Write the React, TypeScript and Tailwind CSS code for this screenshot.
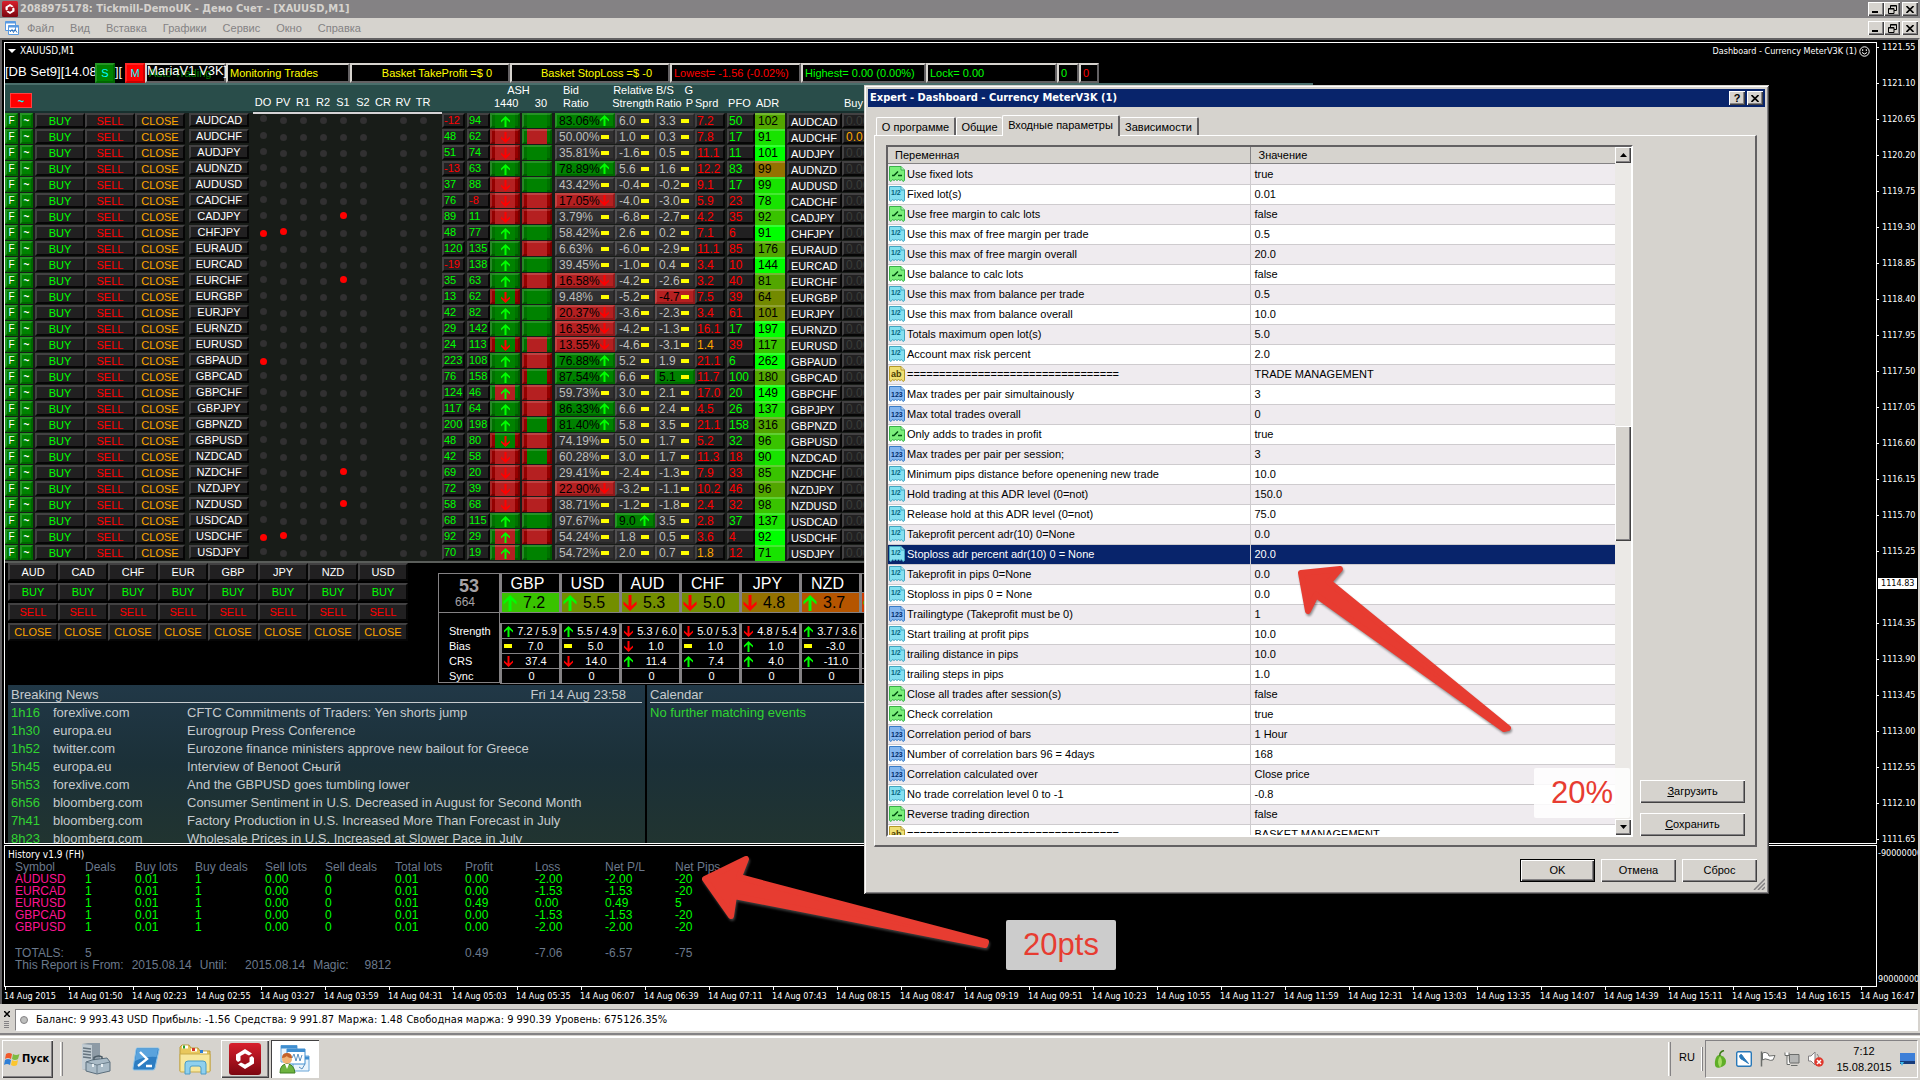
import React from "react";

type Tone = "g" | "r" | "n";

const BEVEL = "border-t-2 border-l-2 border-r-2 border-b-2 border-t-white/15 border-l-white/15 border-r-black/80 border-b-black/80";
const LIT = "border-t-2 border-l-2 border-r-2 border-b-2 border-t-white/15 border-l-white/15 border-r-black/20 border-b-black/20";
const RAISED =
  "bg-[#d6d3ce] shadow-[inset_1px_1px_#fff,inset_-1px_-1px_#424142,inset_-2px_-2px_#848284]";
const TAHOMA = "font-['DejaVu_Sans_Condensed','DejaVu_Sans',sans-serif]";

// pair | n1 | n2 | ash 1440 outer+inner+arrow | ash 30 outer+inner | bid+tone | strength+tone | b/s+tone | spread | pfo+tone | adr+level | red dots
const PAIRS = [
  "AUDCAD|-12|94|ggu|gg|83.06%g|6.0n|3.3n|7.2|50g|102d|",
  "AUDCHF|48|62|rrd|gr|50.00%n|1.0n|0.3n|7.8|17g|91b|",
  "AUDJPY|51|74|rrd|gg|35.81%n|-1.6n|0.5n|11.1|11g|101a|",
  "AUDNZD|-13|63|ggu|gg|78.89%g|5.6n|1.6n|12.2|83g|99f|",
  "AUDUSD|37|88|rrd|gg|43.42%n|-0.4n|-0.2n|9.1|17g|99b|",
  "CADCHF|76|-8|rrd|rr|17.05%r|-4.0n|-3.0n|5.9|23r|78b|",
  "CADJPY|89|11|rrd|rr|3.79%n|-6.8n|-2.7n|4.2|35r|92c|S1",
  "CHFJPY|48|77|ggu|gg|58.42%n|2.6n|0.2n|7.1|6r|91a|DO,PV",
  "EURAUD|120|135|ggu|rr|6.63%n|-6.0n|-2.9n|11.1|85r|176d|",
  "EURCAD|-19|138|ggu|gg|39.45%n|-1.0n|0.4n|3.4|10r|144a|",
  "EURCHF|35|63|ggu|rr|16.58%r|-4.2n|-2.6n|3.2|40r|81d|S1",
  "EURGBP|13|62|rgd|gg|9.48%n|-5.2n|-4.7r|7.5|39r|64e|",
  "EURJPY|42|82|ggu|gg|20.37%r|-3.6n|-2.3n|3.4|61r|101e|",
  "EURNZD|29|142|ggu|gg|16.35%r|-4.2n|-1.3n|16.1|17g|197a|",
  "EURUSD|24|113|rgd|gr|13.55%r|-4.6n|-3.1n|1.4|39r|117c|",
  "GBPAUD|223|108|ggu|rr|76.88%g|5.2n|1.9n|21.1|6g|262a|DO",
  "GBPCAD|76|158|ggu|rg|87.54%g|6.6n|5.1g|11.7|100g|180d|",
  "GBPCHF|124|46|gru|rr|59.73%n|3.0n|2.1n|17.0|20g|149a|",
  "GBPJPY|117|64|ggu|rr|86.33%g|6.6n|2.4n|4.5|26g|137b|",
  "GBPNZD|200|198|ggu|rg|81.40%g|5.8n|3.5n|21.1|158g|316d|",
  "GBPUSD|48|80|rgd|rr|74.19%n|5.0n|1.7n|5.2|32g|96c|",
  "NZDCAD|42|58|rrd|rg|60.28%n|3.0n|1.7n|11.3|18r|90b|",
  "NZDCHF|69|20|rrd|rr|29.41%n|-2.4n|-1.3n|7.9|33r|85c|S1",
  "NZDJPY|72|39|rrd|rr|22.90%r|-3.2n|-1.1n|10.2|46r|96d|",
  "NZDUSD|58|68|rrd|rr|38.71%n|-1.2n|-1.8n|2.4|32r|98c|S1",
  "USDCAD|68|115|ggu|gg|97.67%n|9.0g|3.5n|2.8|37g|137b|",
  "USDCHF|92|29|gru|rr|54.24%n|1.8n|0.5n|3.6|4r|92a|DO,PV",
  "USDJPY|70|19|gru|gg|54.72%n|2.0n|0.7n|1.8|12r|71b|",
].map((line) => line.split("|"));

const DOTS = ["DO", "PV", "R1", "R2", "S1", "S2", "CR", "RV", "TR"];

const LEVEL: Record<string, string> = {
  a: "bg-[#00ff00]",
  b: "bg-[#18e300]",
  c: "bg-[#39c300]",
  d: "bg-[#52a600]",
  e: "bg-[#738a00]",
  f: "bg-[#947100]",
};

const TONE: Record<Tone, string> = {
  g: "bg-[#008200] text-black",
  r: "bg-[#b52021] text-black",
  n: "bg-[#313031] text-[#bdbebd]",
};

const COLS = [15, 15, 50, 50, 50, 68, 20, 20, 20, 20, 20, 20, 20, 20, 20, 9, 25, 23, 32, 33, 60, 40, 40, 30, 30, 32, 55, 28];

const METER = [
  { name: "GBP", value: "7.2", dir: "u", bg: "bg-[#39c300]", rows: ["u7.2 / 5.9", "n7.0", "d37.4", "0"] },
  { name: "USD", value: "5.5", dir: "u", bg: "bg-[#738e00]", rows: ["u5.5 / 4.9", "n5.0", "d14.0", "0"] },
  { name: "AUD", value: "5.3", dir: "d", bg: "bg-[#738e00]", rows: ["d5.3 / 6.0", "d1.0", "u11.4", "0"] },
  { name: "CHF", value: "5.0", dir: "d", bg: "bg-[#738e00]", rows: ["d5.0 / 5.3", "n1.0", "u7.4", "0"] },
  { name: "JPY", value: "4.8", dir: "d", bg: "bg-[#947100]", rows: ["d4.8 / 5.4", "u1.0", "u4.0", "0"] },
  { name: "NZD", value: "3.7", dir: "u", bg: "bg-[#b55500]", rows: ["u3.7 / 3.6", "n-3.0", "u-11.0", "0"] },
  { name: "", value: "", dir: "u", bg: "bg-[#ce3c00]", rows: ["u", "n", "u", ""] },
];

const NEWS = [
  ["1h16", "forexlive.com", "CFTC Commitments of Traders: Yen shorts jump"],
  ["1h30", "europa.eu", "Eurogroup Press Conference"],
  ["1h52", "twitter.com", "Eurozone finance ministers approve new bailout for Greece"],
  ["5h45", "europa.eu", "Interview of Benoot Сњurй"],
  ["5h53", "forexlive.com", "And the GBPUSD goes tumbling lower"],
  ["6h56", "bloomberg.com", "Consumer Sentiment in U.S. Decreased in August for Second Month"],
  ["7h41", "bloomberg.com", "Factory Production in U.S. Increased More Than Forecast in July"],
  ["8h23", "bloomberg.com", "Wholesale Prices in U.S. Increased at Slower Pace in July"],
];

const HISTORY_HEAD = ["Symbol", "Deals", "Buy lots", "Buy deals", "Sell lots", "Sell deals", "Total lots", "Profit", "Loss", "Net P/L", "Net Pips"];
const HISTORY_COLS = [70, 50, 60, 70, 60, 70, 70, 70, 70, 70, 70];
const HISTORY = [
  ["AUDUSD", "1", "0.01", "1", "0.00", "0", "0.01", "0.00", "-2.00", "-2.00", "-20"],
  ["EURCAD", "1", "0.01", "1", "0.00", "0", "0.01", "0.00", "-1.53", "-1.53", "-20"],
  ["EURUSD", "1", "0.01", "1", "0.00", "0", "0.01", "0.49", "0.00", "0.49", "5"],
  ["GBPCAD", "1", "0.01", "1", "0.00", "0", "0.01", "0.00", "-1.53", "-1.53", "-20"],
  ["GBPUSD", "1", "0.01", "1", "0.00", "0", "0.01", "0.00", "-2.00", "-2.00", "-20"],
];
const TOTALS = ["TOTALS:", "5", "", "", "", "", "", "0.49", "-7.06", "-6.57", "-75"];

const TIMES = [
  "2015", "01:50", "02:23", "02:55", "03:27", "03:59", "04:31", "05:03", "05:35", "06:07",
  "06:39", "07:11", "07:43", "08:15", "08:47", "09:19", "09:51", "10:23", "10:55", "11:27",
  "11:59", "12:31", "13:03", "13:35", "14:07", "14:39", "15:11", "15:43", "16:15", "16:47",
];

const PRICES = Array.from({ length: 23 }, (_, i) => (1121.55 - i * 0.45).toFixed(2));

const PARAMS: [string, string, string][] = [
  ["bool", "Use fixed lots", "true"],
  ["half", "Fixed lot(s)", "0.01"],
  ["bool", "Use free margin to calc lots", "false"],
  ["half", "Use this max of free margin per trade", "0.5"],
  ["half", "Use this max of free margin overall", "20.0"],
  ["bool", "Use balance to calc lots", "false"],
  ["half", "Use this max from balance per trade", "0.5"],
  ["half", "Use this max from balance overall", "10.0"],
  ["half", "Totals maximum open lot(s)", "5.0"],
  ["half", "Account max risk percent", "2.0"],
  ["text", "=================================", "TRADE MANAGEMENT"],
  ["int", "Max trades per pair simultainously", "3"],
  ["int", "Max total trades overall", "0"],
  ["bool", "Only adds to trades in profit", "true"],
  ["int", "Max trades per pair per session;", "3"],
  ["half", "Minimum pips distance before openening new trade", "10.0"],
  ["half", "Hold trading at this ADR level (0=not)", "150.0"],
  ["half", "Release hold at this ADR level (0=not)", "75.0"],
  ["half", "Takeprofit percent adr(10) 0=None", "0.0"],
  ["half", "Stoploss adr percent adr(10) 0 = None", "20.0"],
  ["half", "Takeprofit in pips 0=None", "0.0"],
  ["half", "Stoploss in pips 0 = None", "0.0"],
  ["int", "Trailingtype (Takeprofit must be 0)", "1"],
  ["half", "Start trailing at profit pips", "10.0"],
  ["half", "trailing distance in pips", "10.0"],
  ["half", "trailing steps in pips", "1.0"],
  ["bool", "Close all trades after session(s)", "false"],
  ["bool", "Check correlation", "true"],
  ["int", "Correlation period of bars", "1 Hour"],
  ["int", "Number of correlation bars 96 = 4days", "168"],
  ["int", "Correlation calculated over", "Close price"],
  ["half", "No trade correlation level 0 to -1", "-0.8"],
  ["bool", "Reverse trading direction", "false"],
  ["text", "=================================", "BASKET MANAGEMENT"],
];
const SELECTED = 19;

const Arrow = ({ dir, big }: { dir: string; big?: boolean }) => (
  <svg
    viewBox="0 0 9 11"
    className={`${big ? "h-4 w-[14px]" : "h-[11px] w-[9px]"} shrink-0 ${dir === "d" ? "rotate-180 text-[#ff0000]" : "text-[#00ff00]"}`}
  >
    <path d="M4.500 0 L9 4.500 V6.500 L5.500 3.500 V11 H3.500 V3.500 L0 6.500 V4.500 Z" fill="currentColor" />
  </svg>
);

const Mark = ({ dir }: { dir: string }) =>
  dir === "n" ? <i className="block h-1 w-2 shrink-0 bg-[#ffff00]" /> : <Arrow dir={dir} />;

const Reading = ({ text, arrow }: { text: string; arrow: boolean }) => {
  const tone = text.slice(-1) as Tone;
  const dir = arrow && tone !== "n" ? (tone === "g" ? "u" : "d") : "n";
  return (
    <td className="p-0 align-top">
      <div className={`flex h-[15px] items-center justify-between pr-1 pl-0.5 text-xs leading-3 ${LIT} ${TONE[tone]}`}>
        <span>{text.slice(0, -1)}</span>
        <Mark dir={dir} />
      </div>
    </td>
  );
};

const Ash = ({ code }: { code: string }) => (
  <td className="p-0 align-top">
    <div className={`flex h-[15px] w-[30px] justify-center ${LIT} ${code[0] === "g" ? "bg-[#007100]" : "bg-[#940000]"}`}>
      <div
        className={`-mt-0.5 flex h-[15px] w-5 items-center justify-center border-t-2 border-white/15 ${code[1] === "g" ? "bg-[#008200]" : "bg-[#b52021]"}`}
      >
        {code[2] && <Arrow dir={code[2]} />}
      </div>
    </div>
  </td>
);

const PairRow = ({ row, first }: { row: string[]; first: boolean }) => {
  const [pair, n1, n2, ash1, ash2, bid, rs, bs, sprd, pfo, adr, dots] = row;
  const red = dots.split(",");
  return (
    <tr className="h-4">
      <td className="p-0 align-top">
        <button className={`block h-[15px] w-[13px] bg-[#008200] text-[10px] leading-3 text-white ${LIT}`}>F</button>
      </td>
      <td className="p-0 align-top">
        <button className={`block h-[15px] w-[13px] bg-[#008200] text-[10px] leading-3 font-bold text-white ${LIT}`}>~</button>
      </td>
      <td className="p-0 align-top">
        <button className={`block h-[15px] w-[50px] bg-[#212021] leading-3 text-[#00ff00] ${BEVEL}`}>BUY</button>
      </td>
      <td className="p-0 align-top">
        <button className={`block h-[15px] w-[50px] bg-[#212021] leading-3 text-[#ff0000] ${BEVEL}`}>SELL</button>
      </td>
      <td className="p-0 align-top">
        <button className={`block h-[15px] w-[50px] bg-[#212021] leading-3 text-[#ffa600] ${BEVEL}`}>CLOSE</button>
      </td>
      <td className="p-0 pl-1 align-top">
        <button className={`block h-[14px] w-[60px] bg-[#212021] leading-[10px] text-white ${BEVEL}`}>{pair}</button>
      </td>
      {DOTS.map((d) => {
        const on = red.includes(d);
        const low = (d === "DO") === on;
        return (
          <td key={d} className={`p-0 align-top ${first ? "border-t-2 border-[#d6d3d6]" : ""}`}>
            {d !== "CR" && (
              <i className={`mx-auto block h-[7px] w-[7px] rounded-full ${low ? (first ? "mt-[3px]" : "mt-[5px]") : first ? "mt-px" : "mt-[3px]"} ${on ? "bg-[#ff0000]" : "bg-[#313031]"}`} />
            )}
          </td>
        );
      })}
      <td className={`p-0 ${first ? "border-t-2 border-[#d6d3d6]" : ""}`} />
      {[n1, n2].map((n, i) => (
        <td key={i} className="p-0 align-top">
          <div className={`h-[15px] w-[23px] bg-[#212021] leading-[11px] whitespace-nowrap ${BEVEL} border-l-0 ${n.startsWith("-") ? "text-[#ff0000]" : "text-[#00ff00]"}`}>
            {n}
          </div>
        </td>
      ))}
      <Ash code={ash1} />
      <Ash code={ash2} />
      <Reading text={bid} arrow />
      <Reading text={rs} arrow />
      <Reading text={bs} arrow={false} />
      <td className="p-0 align-top">
        <div className={`h-[15px] bg-[#212021] text-xs leading-3 whitespace-nowrap ${BEVEL} ${Number(sprd) < 2 ? "text-[#ffa600]" : "text-[#ff0000]"}`}>{sprd}</div>
      </td>
      <td className="p-0 align-top">
        <div className={`ml-0.5 h-[15px] bg-[#212021] text-xs leading-3 ${BEVEL} border-l-0 ${pfo.endsWith("g") ? "text-[#00ff00]" : "text-[#ff0000]"}`}>
          {pfo.slice(0, -1)}
        </div>
      </td>
      <td className="p-0 align-top">
        <div className={`h-4 w-[30px] border-t-2 border-white/20 pl-[3px] text-xs leading-3 text-black ${LEVEL[adr.slice(-1)]}`}>{adr.slice(0, -1)}</div>
      </td>
      <td className="p-0 align-top">
        <div className={`h-[15px] bg-[#212021] pl-0.5 leading-[14px] text-white ${BEVEL} border-x-0`}>{pair}</div>
      </td>
      <td className="p-0 align-top">
        <div className={`h-[15px] bg-[#212021] pl-0.5 text-xs leading-3 ${BEVEL} border-x-0 ${pair === "AUDCHF" ? "text-[#ffa600]" : "text-[#393c39]"}`}>
          {pair === "AUDCHF" ? "0.01" : "0.00"}
        </div>
      </td>
      <td className="p-0" />
    </tr>
  );
};

const Dashboard = () => (
  <table className="w-[1308px] table-fixed border-collapse bg-[#181c18] text-[11px]">
    <colgroup>
      {COLS.map((w, i) => (
        <col key={i} style={{ width: w }} />
      ))}
      <col />
    </colgroup>
    <thead>
      <tr className="h-[30px] bg-[#294d4a] text-left leading-[13px] text-white shadow-[inset_0_2px_#4a6e6b,inset_0_-2px_#18302e] [&>th]:p-0 [&>th]:pb-[3px] [&>th]:align-bottom [&>th]:font-normal">
        <th colSpan={6}>
          <button className="mb-0.5 ml-[5px] block h-[15px] w-[22px] border border-[#ff4040] bg-[#ff0000] leading-3 font-bold text-[#00ffff]">~</button>
        </th>
        {DOTS.map((d) => (
          <th key={d} className="text-center">{d}</th>
        ))}
        <th />
        <th />
        <th />
        <th colSpan={2}>
          <div className="pr-2 text-center">ASH</div>
          <div className="flex justify-between pr-2 pl-1">
            <span>1440</span>
            <span>30</span>
          </div>
        </th>
        <th><div className="pl-2">Bid<br />Ratio</div></th>
        <th className="text-center"><div className="-ml-1">Relative<br />Strength</div></th>
        <th>
          <div className="flex justify-between pr-0.5 pl-px"><span>B/S</span><span>G</span></div>
          <div className="flex justify-between pr-0.5 pl-px"><span>Ratio</span><span>P</span></div>
        </th>
        <th>Sprd</th>
        <th>&nbsp;PFO</th>
        <th><span className="pl-px">ADR</span></th>
        <th />
        <th><span className="pl-0.5">Buy</span></th>
        <th />
      </tr>
    </thead>
    <tbody>
      {PAIRS.map((row, i) => (
        <PairRow key={row[0]} row={row} first={i === 0} />
      ))}
    </tbody>
  </table>
);

const CurrencyButtons = () => (
  <div className="grid grid-cols-8 content-start gap-y-0.5 text-[11px]">
    {["AUD", "CAD", "CHF", "EUR", "GBP", "JPY", "NZD", "USD"].map((c) => (
      <button key={c} className={`h-[18px] w-[50px] bg-[#212021] leading-3 text-white ${BEVEL}`}>{c}</button>
    ))}
    {Array.from({ length: 8 }, (_, i) => (
      <button key={i} className={`h-[18px] w-[50px] bg-[#212021] leading-3 text-[#00ff00] ${BEVEL}`}>BUY</button>
    ))}
    {Array.from({ length: 8 }, (_, i) => (
      <button key={i} className={`h-[18px] w-[50px] bg-[#212021] leading-3 text-[#ff0000] ${BEVEL}`}>SELL</button>
    ))}
    {Array.from({ length: 8 }, (_, i) => (
      <button key={i} className={`h-[18px] w-[50px] bg-[#212021] leading-3 text-[#ffa600] ${BEVEL}`}>CLOSE</button>
    ))}
  </div>
);

const Meter = () => (
  <div className="flex pt-[10px] text-[11px] text-white">
    <div className="w-[62px]">
      <div className="flex h-10 flex-col items-center justify-center border border-[#848284] text-[#a5a2a5]">
        <b className="text-lg leading-[18px]">53</b>
        <span className="mr-2 text-xs leading-[14px]">664</span>
      </div>
      <div className="h-[70px] border border-t-0 border-[#848284] pt-[11px] pl-2.5 leading-[15px]">
        <div>Strength</div>
        <div>Bias</div>
        <div>CRS</div>
        <div>Sync</div>
      </div>
    </div>
    {METER.map((m, i) => (
      <div key={i} className="w-[60px]">
        <div className="h-5 border border-l-2 border-[#848284] text-center text-base leading-[19px]">
          <span className="mr-1.5">{m.name}</span>
        </div>
        <div className={`flex h-5 items-center gap-1.5 border-x border-b border-l-2 border-[#848284] pl-px text-base text-black ${m.bg}`}>
          <Arrow dir={m.dir} big />
          {m.value}
        </div>
        <div className="mt-2.5 border-t border-[#848284]">
          {m.rows.map((r, j) => {
            const mark = "udn".includes(r[0]) && r !== "";
            return (
              <div key={j} className="flex h-[15px] items-center border-x border-b border-l-2 border-[#848284] pl-0.5 leading-[14px]">
                {mark && <Mark dir={r[0]} />}
                <span className={j === 0 ? "flex-1 pr-0.5 text-right whitespace-nowrap" : "flex-1 text-center"}>{mark ? r.slice(1) : r}</span>
              </div>
            );
          })}
        </div>
      </div>
    ))}
  </div>
);

const News = () => (
  <div className="flex h-[158px] gap-0.5 overflow-hidden pl-[3px] text-[13px] text-[#c6cbce]">
    <section className="w-[637px] bg-linear-to-b from-[#213847] via-[#1b3038] to-[#213430] px-[3px]">
      <header className="flex h-[18px] justify-between border-b border-[#c6cbce] pr-4 leading-[19px]">
        <span>Breaking News</span>
        <span>Fri 14 Aug 23:58</span>
      </header>
      <ul>
        {NEWS.map(([time, site, title]) => (
          <li key={title} className="flex h-[18px] leading-[19px] whitespace-nowrap">
            <span className="w-[42px] text-[#31d331]">{time}</span>
            <a href="#" className="w-[134px]">{site}</a>
            <span>{title}</span>
          </li>
        ))}
      </ul>
    </section>
    <section className="w-[638px] bg-linear-to-b from-[#213847] via-[#1b3038] to-[#213430] px-[3px]">
      <header className="h-[18px] border-b border-[#c6cbce] leading-[19px]">Calendar</header>
      <p className="leading-[19px] text-[#31d331]">No further matching events</p>
    </section>
  </div>
);

const History = () => (
  <div className="mt-px h-[142px] border border-white pt-0.5 text-xs leading-3">
    <div className={`pl-[3px] text-[10px] leading-[13px] text-white ${TAHOMA}`}>History v1.9 (FH)</div>
    <table className="ml-2.5 table-fixed border-collapse text-left text-[#6b798c] [&_td]:p-0 [&_th]:p-0">
      <colgroup>
        {HISTORY_COLS.map((w, i) => (
          <col key={i} style={{ width: w }} />
        ))}
      </colgroup>
      <thead>
        <tr>
          {HISTORY_HEAD.map((h) => (
            <th key={h} className="font-normal whitespace-nowrap">{h}</th>
          ))}
        </tr>
      </thead>
      <tbody>
        {HISTORY.map((row) => (
          <tr key={row[0]} className="text-[#00ff00]">
            {row.map((cell, i) => (
              <td key={i} className={i === 0 ? "text-[#ff1493]" : ""}>{cell}</td>
            ))}
          </tr>
        ))}
        <tr className="h-[26px] align-bottom">
          {TOTALS.map((cell, i) => (
            <td key={i}>{cell}</td>
          ))}
        </tr>
      </tbody>
    </table>
    <p className="flex gap-2 pl-2.5 text-[#6b798c]">
      <span>This Report is From:</span>
      <span>2015.08.14</span>
      <span>Until:</span>
      <span className="pl-2.5">2015.08.14</span>
      <span>Magic:</span>
      <span className="pl-2">9812</span>
    </p>
  </div>
);

const StatusStrip = () => {
  const cell = "h-5 border-2 border-t-[#d6d3ce] border-l-[#d6d3ce] border-r-[#636163] border-b-[#636163] bg-black leading-4 whitespace-nowrap";
  return (
    <div className="flex h-5 text-[11px]">
      <span className="w-[90px] overflow-hidden text-[13px] leading-[18px] whitespace-nowrap text-white">[DB Set9][14.08</span>
      <button className={`h-5 w-5 bg-[#008200] text-[#00ffff] ${LIT}`}>S</button>
      <span className="w-2.5 text-[13px] leading-[18px] text-white">][</span>
      <button className={`h-5 w-5 bg-[#ff0000] text-[#00ffff] ${LIT}`}>M</button>
      <div className={`relative w-[81px] pl-0.5 text-[#008200] ${cell}`}>
        Auto Trading
        <span className="absolute -top-0.5 left-0 text-[13px] text-white">MariaV1 V3K]</span>
      </div>
      <div className={`w-[124px] pl-0.5 text-[#ffff00] ${cell}`}>Monitoring Trades</div>
      <div className={`w-40 pr-4 text-right text-[#ffff00] ${cell}`}>Basket TakeProfit =$ 0</div>
      <div className={`w-40 pr-4 text-right text-[#ffff00] ${cell}`}>Basket StopLoss =$ -0</div>
      <div className={`w-[131px] pl-0.5 text-[#ff0000] ${cell}`}>Lowest= -1.56 (-0.02%)</div>
      <div className={`w-[125px] pl-0.5 text-[#00ff00] ${cell}`}>Highest= 0.00 (0.00%)</div>
      <div className={`w-[131px] pl-0.5 text-[#00ff00] ${cell}`}>Lock= 0.00</div>
      <div className={`w-[22px] pl-0.5 text-[#00ff00] ${cell}`}>0</div>
      <div className={`w-5 pl-0.5 text-[#ff0000] ${cell}`}>0</div>
    </div>
  );
};

const Chart = () => (
  <div className="flex border-t-2 border-r-2 border-l-2 border-t-[#636163] border-r-[#d6d3ce] border-l-[#636163] bg-black pl-0.5">
    <div className="min-w-0 flex-1 pt-0.5">
      <div className="border border-white">
        <div className={`flex h-5 items-center justify-between pr-1.5 pl-[3px] text-[10px] leading-[14px] text-white ${TAHOMA}`}>
          <span className="-mt-1 flex items-center gap-1">
            <svg viewBox="0 0 8 4" className="h-1 w-2"><path d="M0 0H8L4 4Z" fill="#fff" /></svg>
            XAUUSD,M1
          </span>
          <span className="-mt-1 flex items-center gap-0.5 text-[9px]">
            Dashboard - Currency MeterV3K (1)
            <svg viewBox="0 0 11 11" className="h-[11px] w-[11px]" fill="none" stroke="#fff">
              <circle cx="5.500" cy="5.500" r="4.700" />
              <path d="M3 6.500Q5.500 9.500 8 6.500M3.700 3.200V5M7.300 3.200V5" />
            </svg>
          </span>
        </div>
        <StatusStrip />
        <Dashboard />
        <div className="h-0.5 w-[1308px] bg-[#5a5d5a]" />
        <div className="flex h-[122px] gap-[30px] overflow-hidden pl-[3px]">
          <CurrencyButtons />
          <Meter />
        </div>
        <News />
      </div>
      <History />
      <div className={`flex h-[17px] text-[9px] text-white ${TAHOMA}`}>
        {TIMES.map((t) => (
          <span key={t} className="w-16 shrink-0 whitespace-nowrap">
            <i className="ml-px block h-[3px] w-px bg-white" />
            <span className="block leading-3">14 Aug {t}</span>
          </span>
        ))}
      </div>
    </div>
    <div className={`w-[41px] overflow-hidden text-[9px] leading-[14px] text-white ${TAHOMA}`}>
      {PRICES.map((p, i) =>
        p === "1114.80" ? (
          <div key={p} className="flex h-9 items-start">
            <span className="-mt-0.5 ml-px bg-white px-[3px] leading-[11px] text-black">1114.83</span>
          </div>
        ) : (
          <div key={p} className={`flex items-start ${i === PRICES.length - 1 ? "h-[14px]" : "h-9"}`}>
            <i className="mt-[7px] mr-[3px] block h-px w-0.5 bg-white" />
            {p}
          </div>
        )
      )}
      <div className="pl-px">-90000000</div>
      <div className="mt-[112px] pl-px">90000000</div>
    </div>
  </div>
);

const ICON: Record<string, { fill: string; edge: string; ink: string }> = {
  bool: { fill: "#7bef7b", edge: "#39b24a", ink: "#004d10" },
  half: { fill: "#84dff0", edge: "#42a6c0", ink: "#00617b" },
  text: { fill: "#efdf73", edge: "#b59a29", ink: "#4a3c00" },
  int: { fill: "#84b6ef", edge: "#397dc6", ink: "#002c6b" },
};

const ParamIcon = ({ kind }: { kind: string }) => {
  const c = ICON[kind];
  return (
    <svg viewBox="0 0 16 16" className="h-4 w-4 shrink-0">
      <path d="M.500 .500H12L15.500 4V14.500L14 15.500 12.500 13.500 11 14.500 9.500 13.500 8 14.500 6.500 13.500 5 14.500 3.500 13.500 2 15.500 .500 14.500Z" fill={c.fill} stroke={c.edge} />
      <path d="M12 .500V4H15.500" fill="#fff" fillOpacity=".5" stroke={c.edge} />
      {kind === "bool" && <path d="M3 9.500H5L9 5.500M9 9.500H13" stroke={c.ink} strokeWidth="1.500" fill="none" />}
      {kind === "half" && (
        <text x="2" y="9" fontSize="7" fontWeight="700" fill={c.ink}>1/2</text>
      )}
      {kind === "int" && (
        <text x="2" y="11" fontSize="7" fontWeight="700" fill={c.ink}>123</text>
      )}
      {kind === "text" && (
        <text x="2" y="11" fontSize="9" fontWeight="700" fill={c.ink}>ab</text>
      )}
    </svg>
  );
};

const ExpertDialog = () => (
  <div
    role="dialog"
    aria-label="Expert"
    className="absolute top-[85px] left-[864px] w-[905px] bg-[#d6d3ce] p-1 text-[11px] text-black shadow-[inset_1px_1px_#d6d3ce,inset_-1px_-1px_#424142,inset_2px_2px_#fff,inset_-2px_-2px_#848284]"
  >
    <div className="flex h-[18px] items-center bg-[#08246b] pr-0.5 pl-0.5 text-white">
      <b className={`flex-1 text-[11px] ${TAHOMA}`}>Expert - Dashboard - Currency MeterV3K (1)</b>
      <button className={`mr-0.5 h-[14px] w-4 font-bold leading-[13px] text-black ${RAISED}`}>?</button>
      <CloseButton />
    </div>
    <div role="tablist" className="flex h-7 items-end pl-2">
      <button role="tab" className="h-[18px] w-20 rounded-t-xs border-t border-r-2 border-l border-t-white border-r-[#636163] border-l-white pt-px">О программе</button>
      <button role="tab" className="h-[18px] w-[46px] rounded-t-xs border-t border-l border-white pt-px">Общие</button>
      <button role="tab" aria-selected className="relative -mb-px h-[21px] w-[118px] rounded-t-xs border-t border-r-2 border-l border-t-white border-r-[#636163] border-l-white bg-[#d6d3ce] pb-0.5">Входные параметры</button>
      <button role="tab" className="h-[18px] w-[79px] rounded-t-xs border-t border-r-2 border-t-white border-r-[#636163] pt-px">Зависимости</button>
    </div>
    <div className="mr-2 ml-1.5 flex border-t border-r-2 border-b-2 border-l border-t-white border-r-[#636163] border-b-[#636163] border-l-white pt-[9px] pr-2.5 pb-2 pl-[11px]">
      <div className="flex h-[692px] flex-1 border-2 border-t-[#636163] border-r-white border-b-white border-l-[#636163] bg-white">
        <div className="flex-1 overflow-hidden">
          <table className="w-full table-fixed border-collapse text-left [&_td]:p-0 [&_th]:p-0">
            <colgroup>
              <col className="w-[362px]" />
              <col />
            </colgroup>
            <thead>
              <tr className="h-[17px] bg-[#d6d3ce] shadow-[inset_0_-1px_#848284]">
                <th className="border-r border-[#848284] font-normal"><span className="pl-[7px]">Переменная</span></th>
                <th className="font-normal"><span className="pl-2">Значение</span></th>
              </tr>
            </thead>
            <tbody>
              {PARAMS.map(([kind, name, value], i) => (
                <tr
                  key={i}
                  className={`h-5 border-b border-[#cecbce] whitespace-nowrap ${i === SELECTED ? "bg-[#08246b] text-white" : i % 2 ? "bg-white" : "bg-[#efebef]"}`}
                >
                  <td className="border-r border-[#cecbce]">
                    <span className="flex items-center gap-0.5 pl-px leading-4">
                      <ParamIcon kind={kind} />
                      {name}
                    </span>
                  </td>
                  <td><span className="pl-1">{value}</span></td>
                </tr>
              ))}
            </tbody>
          </table>
        </div>
        <div className="flex w-4 flex-col bg-[#ebe9e6]">
          <button aria-label="Up" className={`flex h-4 items-center justify-center ${RAISED}`}>
            <svg viewBox="0 0 7 4" className="h-1 w-[7px]"><path d="M0 4H7L3.500 0Z" /></svg>
          </button>
          <div className="flex-[263]" />
          <div className={`flex-[115] ${RAISED}`} />
          <div className="flex-[278]" />
          <button aria-label="Down" className={`flex h-4 items-center justify-center ${RAISED}`}>
            <svg viewBox="0 0 7 4" className="h-1 w-[7px]"><path d="M0 0H7L3.500 4Z" /></svg>
          </button>
        </div>
      </div>
      <div className="ml-[7px] flex flex-col justify-end gap-2.5 pb-px">
        <button className={`h-[23px] w-[105px] ${RAISED}`}><u>З</u>агрузить</button>
        <button className={`h-[23px] w-[105px] ${RAISED}`}><u>С</u>охранить</button>
      </div>
    </div>
    <div className="flex justify-end gap-1.5 pt-3 pr-2 pb-2">
      <button className={`h-[23px] w-[75px] border border-black ${RAISED}`}>OK</button>
      <button className={`h-[23px] w-[75px] ${RAISED}`}>Отмена</button>
      <button className={`h-[23px] w-[75px] ${RAISED}`}>Сброс</button>
    </div>
    <svg viewBox="0 0 12 12" className="absolute right-1 bottom-1 h-3 w-3" stroke="#848284" strokeWidth="1.500">
      <path d="M1 12L12 1M5 12L12 5M9 12L12 9" />
    </svg>
  </div>
);

const CloseButton = () => (
  <button aria-label="Close" className={`flex h-[14px] w-4 items-center justify-center ${RAISED}`}>
    <svg viewBox="0 0 8 7" className="h-[7px] w-2" stroke="#000" strokeWidth="1.600"><path d="M.500 0L7.500 7M7.500 0L.500 7" /></svg>
  </button>
);

const WindowButtons = () => (
  <div className="ml-auto flex pr-0.5">
    <button aria-label="Minimize" className={`flex h-[14px] w-4 items-end pb-[3px] pl-1 ${RAISED}`}>
      <i className="block h-0.5 w-1.5 bg-black" />
    </button>
    <button aria-label="Restore" className={`mr-0.5 flex h-[14px] w-4 items-center justify-center ${RAISED}`}>
      <svg viewBox="0 0 9 9" className="h-[9px] w-[9px]" fill="none" stroke="#000">
        <path d="M2.500 3V.500H8.500V5.500H6M2.500 1H8.500M.500 3.500H6V8.500H.500ZM.500 4H6" />
      </svg>
    </button>
    <CloseButton />
  </div>
);

const TickmillLogo = ({ className }: { className: string }) => (
  <svg viewBox="0 0 32 32" className={className}>
    <defs>
      <linearGradient id="tm" x1="0" y1="0" x2="0" y2="1">
        <stop offset="0" stopColor="#d8202c" />
        <stop offset="1" stopColor="#7c0610" />
      </linearGradient>
    </defs>
    <rect width="32" height="32" rx="3" fill="url(#tm)" />
    <path d="M7 17V11.500L16 6 23 10.500 20 12.500 16 10.500 11.500 13V17.500L9 19Z" fill="#fff" />
    <path d="M25 15V20.500L16 26 9 21.500 12 19.500 16 21.500 20.500 19V14.500L23 13Z" fill="#fff" />
  </svg>
);

const Taskbar = () => (
  <footer className="flex h-[43px] items-center border-t border-white bg-[#d6d3ce] px-0.5 text-[11px]">
    <button className={`flex h-[38px] w-[51px] items-center gap-0.5 pl-0.5 text-[11px] font-bold ${TAHOMA} ${RAISED}`}>
      <svg viewBox="0 0 16 14" className="h-[14px] w-4 shrink-0">
        <path d="M2 2Q5 0 8 2L7 7Q4 5 1 7Z" fill="#f1592a" />
        <path d="M9 2Q12 4 15.500 2L14 7Q11 9 8 7Z" fill="#7ebb42" />
        <path d="M1 8Q4 6 7 8L6 13Q3 11 0 13Z" fill="#2f7fd6" />
        <path d="M8 8Q11 10 14 8L13 13Q10 15 7 13Z" fill="#fbc62f" />
      </svg>
      Пуск
    </button>
    <i className="ml-[7px] block h-[34px] w-[3px] border-r border-l border-r-[#848284] border-l-white" />
    <button aria-label="Server Manager" className="ml-[17px]">
      <svg viewBox="0 0 32 32" className="h-8 w-8">
        <path d="M2 1L8 0H20V27L14 29 2 26Z" fill="#8d9aa5" />
        <path d="M2 1L12 2V28L2 26Z" fill="#c2ccd3" />
        <path d="M3 5L11 6M3 8L11 9M3 11L11 12M3 14L11 15" stroke="#66747f" strokeWidth="1.400" />
        <path d="M12 17L27 15 30 19V28L17 31 6 28V19Z" fill="#a9bac6" stroke="#5b6e7c" />
        <path d="M6 19L17 22 30 19M17 22V31" stroke="#6d808e" fill="none" />
        <path d="M14 17V14.500Q18 12 22 14V16" stroke="#4b5b66" strokeWidth="1.500" fill="none" />
        <path d="M13 21V24M22 21V24" stroke="#e9f0f4" strokeWidth="2" />
      </svg>
    </button>
    <button aria-label="PowerShell" className="ml-5">
      <svg viewBox="0 0 28 24" className="h-6 w-7">
        <path d="M5 1H26Q27.500 1 27 3L23 21Q22.500 23 21 23H2Q.500 23 1 21L4 3Q4 1 5 1Z" fill="#2d7dc2" stroke="#8cc4ea" />
        <path d="M5 2H26L24.500 10Q14 9 3 14Z" fill="#6db4e8" fillOpacity=".7" />
        <path d="M8 5L15 12 6 19M14 19H20" stroke="#fff" strokeWidth="2.400" fill="none" />
      </svg>
    </button>
    <button aria-label="Explorer" className="ml-[18px]">
      <svg viewBox="0 0 34 32" className="h-8 w-[34px]">
        <path d="M2 6V4L4 2H11L13 5H20L22 8H32V28H2Z" fill="#e8c75c" stroke="#b99a3a" />
        <path d="M4 4H10M13 7H19M22 10H29" stroke="#fff" strokeWidth="3" />
        <path d="M5 4H7" stroke="#26a02c" strokeWidth="3" />
        <path d="M14 6.500H17" stroke="#d5372b" strokeWidth="3" />
        <path d="M22 8.500H25" stroke="#2c7ed6" strokeWidth="3" />
        <path d="M2 11H32V28Q32 29 31 29H3Q2 29 2 28Z" fill="#f7e79c" stroke="#c9ab4a" />
        <path d="M7 31V21Q7 18 10 18H25Q28 18 28 21V31H23V25Q23 23 21 23H14Q12 23 12 25V31Z" fill="#8fd0ee" stroke="#4a9cc8" />
      </svg>
    </button>
    <button aria-label="Tickmill" className={`ml-[9px] flex h-[38px] w-12 items-center justify-center ${RAISED}`}>
      <TickmillLogo className="h-8 w-8" />
    </button>
    <button aria-label="MetaTrader" className="ml-0.5 flex h-[38px] w-12 items-center justify-center bg-white shadow-[inset_1px_1px_#424142,inset_-1px_-1px_#fff]">
      <svg viewBox="0 0 32 30" className="h-[30px] w-8">
        <path d="M2 1.500H18V18H2ZM18 12H30V27H14V12Z" fill="#eaf4fc" stroke="#6aa6d8" />
        <path d="M8 5H26V20H8Z" fill="#fff" stroke="#3f8ed0" />
        <path d="M2 3H18M8 6.500H26M26 14H30" stroke="#3f8ed0" strokeWidth="3" />
        <path d="M13 14L15 10 17 17 19 10 21 17 23 11M20 23L23 25 26 20" stroke="#5a90c0" fill="none" />
        <circle cx="8" cy="15" r="5" fill="#f2b274" />
        <path d="M3 14Q3 9 8 9T13 14Q9 14 8 12 6 14 3 14Z" fill="#c4622a" />
        <path d="M1 29Q1 20 8 20T16 29Z" fill="#6db33f" stroke="#3f8020" />
        <path d="M6 20L8 25 10 20Z" fill="#fff" />
      </svg>
    </button>
    <i className="ml-auto block h-[34px] w-[3px] border-r border-l border-r-[#848284] border-l-white" />
    <span className="ml-2 pb-1">RU</span>
    <i className="ml-1.5 block h-6 w-0.5 border-r border-l border-r-[#848284] border-l-white" />
    <div className="ml-0.5 flex h-[38px] w-[213px] items-center border border-t-[#848284] border-r-white border-b-white border-l-[#848284] pr-0.5 pl-1.5">
      <svg viewBox="0 0 16 18" className="mr-2 h-[18px] w-4">
        <path d="M8 5Q14 7 14 11.500T8 17.500 3 11.500 8 5Z" fill="#5fae28" />
        <path d="M8 6Q4 12 8 17.500Q12 12 8 6Z" fill="#a4dc62" />
        <path d="M8 6Q7 2 12 .500" stroke="#3b7a16" strokeWidth="1.500" fill="none" />
      </svg>
      <svg viewBox="0 0 16 16" className="mr-2 h-4 w-4">
        <rect x=".700" y=".700" width="14.600" height="14.600" rx="1.500" fill="#fff" stroke="#2878b8" strokeWidth="1.400" />
        <path d="M3.500 5.500Q3.500 3.500 5.500 3.500L8 7 12.500 12.500 7 9Q4 8 3.500 5.500Z" fill="#2878b8" stroke="#2878b8" />
      </svg>
      <svg viewBox="0 0 16 16" className="mr-2 h-4 w-4">
        <path d="M1.500 .500V15.500" stroke="#6b6d6b" strokeWidth="1.500" />
        <path d="M2.500 2Q5 .500 8 2.500L9 5 15 4.500 13 9Q10 10 8 8.500 5 7 2.500 9Z" fill="#fff" stroke="#6b6d6b" />
      </svg>
      <svg viewBox="0 0 16 16" className="mr-2 h-4 w-4">
        <path d="M5.500 3.500H15V12H5.500ZM7 14.500H13.500" fill="#b5b6b5" stroke="#6b6d6b" />
        <path d="M1 1.500V4.500H5V1.500M3 4.500V13.500H6" stroke="#6b6d6b" fill="#fff" />
      </svg>
      <svg viewBox="0 0 16 16" className="h-4 w-4">
        <path d="M.500 5V10H3L7 14V1L3 5Z" fill="#fff" stroke="#848284" />
        <path d="M9 3Q11 5 11 8" stroke="#848284" fill="none" />
        <circle cx="11" cy="11" r="4.700" fill="#e0382c" />
        <path d="M9 9L13 13M13 9L9 13" stroke="#fff" strokeWidth="1.500" />
      </svg>
      <div className="flex-1 pl-1 text-center leading-4">
        <div>7:12</div>
        <div>15.08.2015</div>
      </div>
      <svg viewBox="0 0 15 13" className="h-[13px] w-[15px]">
        <rect width="15" height="11" fill="#3d7fd8" />
        <path d="M0 8H15V11H0Z" fill="#163b7a" />
        <path d="M0 9L4 9 2 13Z" fill="#3fb8e8" />
      </svg>
    </div>
  </footer>
);

const App = () => {
  return (
    <div className="relative flex min-h-screen flex-col overflow-hidden bg-[#d6d3ce] font-['Liberation_Sans',Arial,sans-serif]">
      <div className="flex h-[18px] items-center bg-[#848284] pl-0.5 text-[#d6d3ce]">
        <TickmillLogo className="h-4 w-4" />
        <b className={`pl-0.5 text-[11px] ${TAHOMA}`}>2088975178: Tickmill-DemoUK - Демо Счет - [XAUUSD,M1]</b>
        <WindowButtons />
      </div>
      <nav className="flex h-5 items-center pl-[5px] text-[11px] text-[#848284]">
        <svg viewBox="0 0 14 14" className="mr-2 h-[14px] w-[14px]">
          <path d="M.500 .500H10.500V9.500H.500ZM3.500 4.500H13.500V13.500H3.500Z" fill="#fff" stroke="#5a9ae0" />
          <path d="M.500 1.500H10.500M3.500 5.500H13.500" stroke="#5a9ae0" strokeWidth="2" />
          <path d="M5 11L7 8.500 8.500 11.500 10 8.500 12 11.500" stroke="#2f6fb8" fill="none" />
        </svg>
        <div className="flex gap-4">
          {["Файл", "Вид", "Вставка", "Графики", "Сервис", "Окно", "Справка"].map((item) => (
            <a key={item} href="#">{item}</a>
          ))}
        </div>
        <WindowButtons />
      </nav>
      <Chart />
      <div className="flex h-[33px] border-b border-white">
        <div className="flex h-[31px] flex-1 items-start border-b-2 border-[#848284] pt-[5px] pr-0.5 pl-1">
          <div className="mt-0.5 w-[11px]">
            <svg viewBox="0 0 6 6" className="h-1.5 w-1.5" stroke="#000" strokeWidth="1.500"><path d="M0 0L6 6M6 0L0 6" /></svg>
            <svg viewBox="0 0 5 8" className="mt-1 h-2 w-[5px]" stroke="#848284"><path d="M0 .500H5M0 2.500H5M0 4.500H5M0 6.500H5" /></svg>
          </div>
          <div className={`flex h-[22px] flex-1 items-center gap-1 border border-t-[#848284] border-r-white border-b-white border-l-[#848284] bg-white pl-1 text-[11px] ${TAHOMA}`}>
            <i className="mr-1 block h-2 w-2 rounded-full border border-[#848284] bg-[#bdbebd]" />
            <span>Баланс: 9 993.43 USD</span>
            <span>Прибыль: -1.56</span>
            <span>Средства: 9 991.87</span>
            <span>Маржа: 1.48</span>
            <span>Свободная маржа: 9 990.39</span>
            <span>Уровень: 675126.35%</span>
          </div>
        </div>
      </div>
      <Taskbar />

      <ExpertDialog />
      <svg viewBox="0 0 220 170" className="absolute top-[564px] left-[1295px] h-[170px] w-[220px] drop-shadow-[1px_2px_1px_rgba(0,0,0,0.4)]">
        <path d="M6 9L45 5 34 18 213 164 209 165 21 31 13 47Z" fill="#e73c31" stroke="#e73c31" strokeWidth="6" strokeLinejoin="round" />
      </svg>
      <span className="absolute top-[768px] left-[1534px] flex h-[50px] w-24 items-center justify-center rounded-xs bg-white/85 text-[31px] text-[#e73c31]">20%</span>
      <svg viewBox="0 0 300 100" className="absolute top-[853px] left-[698px] h-[100px] w-[300px] drop-shadow-[1px_2px_1px_rgba(120,120,120,0.5)]">
        <path d="M7 26L48 6 41 24 288 89 287 92 36 43 33 63Z" fill="#e73c31" stroke="#e73c31" strokeWidth="6" strokeLinejoin="round" />
      </svg>
      <span className="absolute top-[920px] left-[1006px] flex h-[50px] w-[110px] items-center justify-center rounded-xs bg-[#cccccc] text-[31px] text-[#e73c31]">20pts</span>
    </div>
  );
};

export default App;
